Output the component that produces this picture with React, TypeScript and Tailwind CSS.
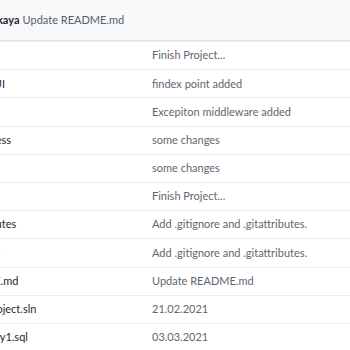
const files = [
  { name: 'Business', message: 'Finish Project...', dir: true },
  { name: 'ConsoleUI', message: 'findex point added', dir: true },
  { name: 'Core', message: 'Excepiton middleware added', dir: true },
  { name: 'DataAccess', message: 'some changes', dir: true },
  { name: 'Entities', message: 'some changes', dir: true },
  { name: 'WebAPI', message: 'Finish Project...', dir: true },
  { name: '.gitattributes', message: 'Add .gitignore and .gitattributes.', dir: false },
  { name: '.gitignore', message: 'Add .gitignore and .gitattributes.', dir: false },
  { name: 'README.md', message: 'Update README.md', dir: false },
  { name: 'ReCapProject.sln', message: '21.02.2021', dir: false },
  { name: 'SQLQuery1.sql', message: '03.03.2021', dir: false },
];

function FileIcon({ dir }: { dir: boolean }) {
  return dir ? (
    <svg width="16" height="16" viewBox="0 0 16 16" fill="#79b8ff">
      <path d="M1.75 1A1.75 1.75 0 000 2.75v10.5C0 14.216.784 15 1.75 15h12.5A1.75 1.75 0 0016 13.25v-8.5A1.75 1.75 0 0014.25 3h-6.5a.25.25 0 01-.2-.1l-.9-1.2c-.33-.44-.85-.7-1.4-.7h-3.5z" />
    </svg>
  ) : (
    <svg width="16" height="16" viewBox="0 0 16 16" fill="#6a737d">
      <path d="M3.75 1.5a.25.25 0 00-.25.25v11.5c0 .138.112.25.25.25h8.5a.25.25 0 00.25-.25V6H9.75A1.75 1.75 0 018 4.25V1.5H3.75zm5.75.56v2.19c0 .138.112.25.25.25h2.19L9.5 2.06z" />
    </svg>
  );
}

export default function App() {
  return (
    <div className="w-[350px] h-[350px] overflow-hidden bg-white font-['Lato','Open_Sans',sans-serif] text-[11px]">
      <div className="-ml-[100px] w-[700px]">
        <div className="h-[41px] bg-[#f6f8fa] border-b border-[#e1e4e8] flex items-center pl-[55px]">
          <div className="w-[20px] h-[20px] rounded-full bg-[#c9d1d9] mr-[8px]" />
          <span className="font-bold text-[#24292e]">yalkaya</span>
          <span className="ml-[3px] text-[#586069]">Update README.md</span>
        </div>
        {files.map((f) => (
          <div key={f.name} className="h-[28.2px] flex items-center border-t border-[#eaecef] first:border-t-0">
            <div className="w-[252px] flex items-center pl-[29px] gap-[10px]">
              <FileIcon dir={f.dir} />
              <span className="text-[#24292e]">{f.name}</span>
            </div>
            <span className="text-[#5f6770]">{f.message}</span>
          </div>
        ))}
      </div>
    </div>
  );
}
